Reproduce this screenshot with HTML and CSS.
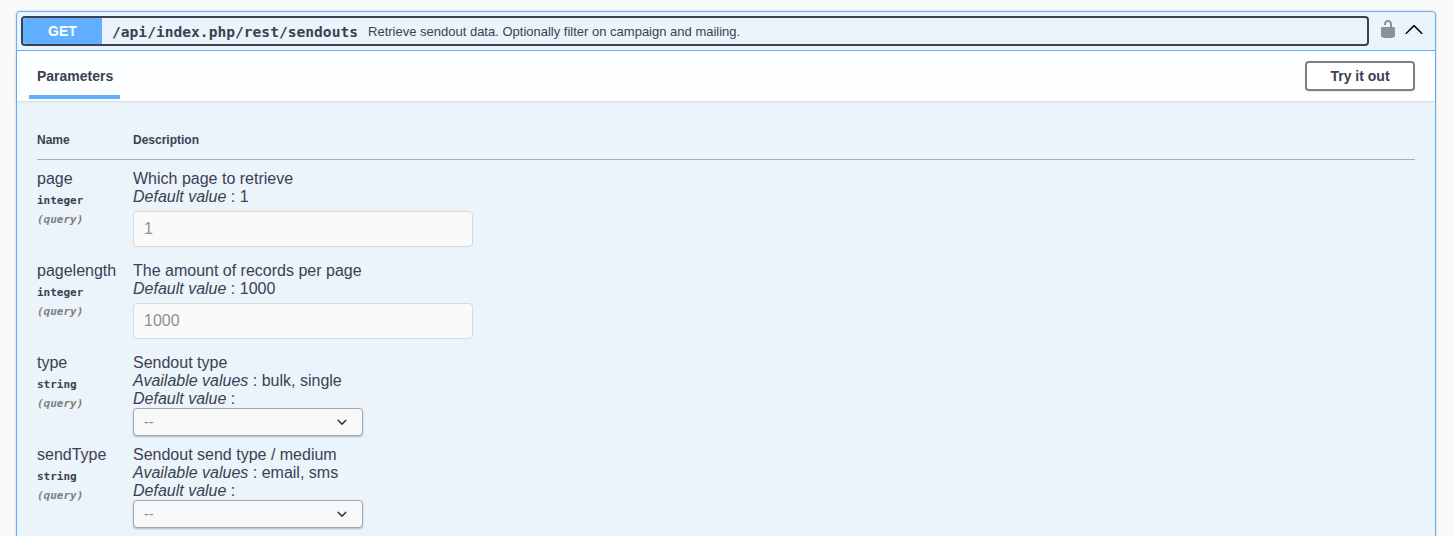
FILE: index.html
```html
<!DOCTYPE html>
<html lang="en">
<head>
<meta charset="utf-8">
<title>sendouts</title>
<link rel="stylesheet" href="styles.css">
</head>
<body>
<div class="opblock">
  <div class="summary">
    <div class="summary-control">
      <span class="method">GET</span>
      <span class="path">/api/index.php/rest/sendouts</span>
      <span class="summary-desc">Retrieve sendout data. Optionally filter on campaign and mailing.</span>
    </div>
    <svg class="lock" viewBox="0 0 20 20" width="20" height="20"><path d="M15.8 8H14V5.6C14 2.703 12.665 1 10 1 7.334 1 6 2.703 6 5.6V6h2v-.801C8 3.754 8.797 3 10 3c1.203 0 2 .754 2 2.199V8H4c-.553 0-1 .646-1 1.199V17c0 .549.428 1.139.951 1.307l1.197.387C5.672 18.861 6.55 19 7.1 19h5.8c.549 0 1.428-.139 1.951-.307l1.196-.387c.524-.167.953-.757.953-1.306V9.199C17 8.646 16.352 8 15.8 8z"/></svg>
    <svg class="arrow" viewBox="0 0 20 20" width="20" height="20"><path d="M17.418 6.109c.272-.268.709-.268.979 0s.271.701 0 .969l-7.908 7.83c-.27.268-.707.268-.979 0l-7.908-7.83c-.27-.268-.27-.701 0-.969.271-.268.709-.268.979 0L10 13.25l7.418-7.141z"/></svg>
  </div>
  <div class="section-header">
    <div class="tab">Parameters</div>
    <button class="try-out">Try it out</button>
  </div>
  <div class="params">
    <table class="param-table">
      <thead>
        <tr><th class="col-name">Name</th><th>Description</th></tr>
      </thead>
      <tbody>
        <tr>
          <td class="col-name"><div class="pname">page</div><div class="ptype">integer</div><div class="pin">(query)</div></td>
          <td><div class="line">Which page to retrieve</div><div class="line"><i>Default value</i> : 1</div><input class="field" placeholder="1"></td>
        </tr>
        <tr>
          <td class="col-name"><div class="pname">pagelength</div><div class="ptype">integer</div><div class="pin">(query)</div></td>
          <td><div class="line">The amount of records per page</div><div class="line"><i>Default value</i> : 1000</div><input class="field" placeholder="1000"></td>
        </tr>
        <tr>
          <td class="col-name"><div class="pname">type</div><div class="ptype">string</div><div class="pin">(query)</div></td>
          <td><div class="line">Sendout type</div><div class="line"><i>Available values</i> : bulk, single</div><div class="line"><i>Default value</i> :</div><select class="choice"><option>--</option><option>bulk</option><option>single</option></select></td>
        </tr>
        <tr>
          <td class="col-name"><div class="pname">sendType</div><div class="ptype">string</div><div class="pin">(query)</div></td>
          <td><div class="line">Sendout send type / medium</div><div class="line"><i>Available values</i> : email, sms</div><div class="line"><i>Default value</i> :</div><select class="choice"><option>--</option><option>email</option><option>sms</option></select></td>
        </tr>
      </tbody>
    </table>
  </div>
</div>
</body>
</html>
```
FILE: styles.css
```css
* { box-sizing: border-box; }
html, body { margin: 0; height: 100%; overflow: hidden; }
body {
  background: #fafafa;
  padding: 11px 17px 0 16px;
  font-family: "Liberation Sans", Arial, sans-serif;
  color: #3b4151;
}
.opblock {
  border: 1px solid #61affe;
  border-radius: 4px;
  background: #ebf3fb;
  box-shadow: 0 0 3px rgba(0, 0, 0, .19);
  height: 600px;
}
.summary {
  display: flex;
  align-items: center;
  height: 39px;
  padding: 4px 11px 4px 4px;
  border-bottom: 1px solid #61affe;
}
.summary-control {
  flex: 1;
  display: flex;
  align-items: center;
  height: 30px;
  border: 2px solid #3b4151;
  border-radius: 4px;
  overflow: hidden;
}
.method {
  width: 79px;
  height: 100%;
  flex: none;
  display: flex;
  align-items: center;
  justify-content: center;
  background: #61affe;
  color: #fff;
  font-size: 14px;
  font-weight: 700;
  border-radius: 3px 0 0 3px;
}
.path {
  margin-left: 10px;
  font-family: "DejaVu Sans Mono", monospace;
  font-weight: 700;
  font-size: 14.6px;
  white-space: nowrap;
}
.summary-desc { margin-left: 10px; font-size: 13px; white-space: nowrap; }
.lock { margin: 0 6px 4px 9px; fill: #000; opacity: .4; flex: none; }
.arrow { transform: rotate(180deg); margin-bottom: 2px; flex: none; }
.section-header {
  display: flex;
  align-items: center;
  justify-content: space-between;
  height: 50px;
  padding: 0 20px 0 12px;
  background: rgba(255, 255, 255, .9);
  box-shadow: 0 1px 2px rgba(0, 0, 0, .1);
}
.tab {
  align-self: flex-start;
  width: 91px;
  height: 48px;
  padding: 17px 0 0 8px;
  border-bottom: 4px solid #61affe;
  font-size: 14px;
  font-weight: 700;
  color: #3b4151;
}
.try-out {
  width: 110px;
  height: 30px;
  border: 2px solid #808080;
  border-radius: 4px;
  background: #fff;
  color: #3b4151;
  font: 700 14px "Liberation Sans", Arial, sans-serif;
  box-shadow: 0 1px 2px rgba(0, 0, 0, .1);
}
.params { padding: 20px 20px 0; }
.param-table { width: 100%; border-collapse: separate; border-spacing: 0; }
.param-table th {
  height: 39px;
  padding: 0 0 1px;
  text-align: left;
  font-size: 12px;
  font-weight: 700;
  color: #3b4151;
  border-bottom: 1px solid #a8aebb;
}
.param-table td { height: 92px; padding: 10px 0 0; vertical-align: top; }
.col-name { width: 96px; }
.pname { font-size: 16px; line-height: 18px; }
.ptype {
  margin-top: 5px;
  font: 700 11px/15px "DejaVu Sans Mono", monospace;
}
.pin {
  margin-top: 4px;
  font: italic 700 11px/15px "DejaVu Sans Mono", monospace;
  color: #808080;
}
.line { font-size: 16px; line-height: 18px; }
.field {
  display: block;
  width: 340px;
  height: 36px;
  margin-top: 5px;
  padding: 0 10px;
  border: 1px solid #d9d9d9;
  border-radius: 4px;
  background: #fafafa;
  font: 16px "Liberation Sans", Arial, sans-serif;
}
.field::placeholder { color: #8f8f8f; }
.choice {
  display: block;
  width: 230px;
  height: 28px;
  margin-top: 0;
  padding: 0 10px;
  appearance: none;
  border: 1px solid #a8a8a8;
  border-radius: 4px;
  background: #f7f8fa url("data:image/svg+xml,%3Csvg xmlns='http://www.w3.org/2000/svg' viewBox='0 0 20 20'%3E%3Cpath d='M13.418 7.859a.695.695 0 0 1 .978 0 .68.68 0 0 1 0 .969l-3.908 3.83a.697.697 0 0 1-.979 0l-3.908-3.83a.68.68 0 0 1 0-.969.695.695 0 0 1 .978 0L10 11l3.418-3.141z' fill='%23333'/%3E%3C/svg%3E") right 10px center / 20px no-repeat;
  box-shadow: 0 1px 2px rgba(0, 0, 0, .25);
  color: #8a8a8a;
  font: 14px "Liberation Sans", Arial, sans-serif;
}
```
